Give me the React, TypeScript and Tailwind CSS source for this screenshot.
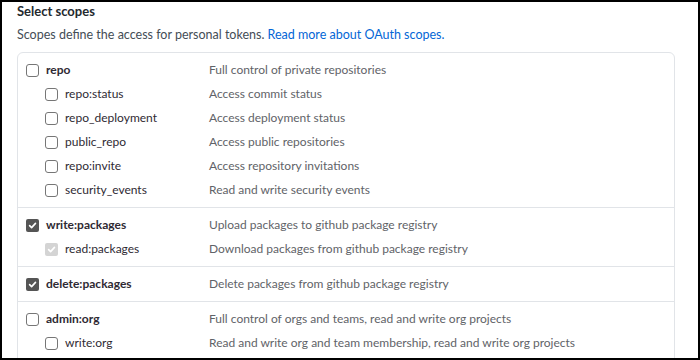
import React from 'react';

type Scope = {
  name: string;
  desc: string;
  checked?: boolean;
  disabled?: boolean;
  children?: Scope[];
};

const groups: Scope[] = [
  {
    name: 'repo',
    desc: 'Full control of private repositories',
    children: [
      { name: 'repo:status', desc: 'Access commit status' },
      { name: 'repo_deployment', desc: 'Access deployment status' },
      { name: 'public_repo', desc: 'Access public repositories' },
      { name: 'repo:invite', desc: 'Access repository invitations' },
      { name: 'security_events', desc: 'Read and write security events' },
    ],
  },
  {
    name: 'write:packages',
    desc: 'Upload packages to github package registry',
    checked: true,
    children: [
      { name: 'read:packages', desc: 'Download packages from github package registry', checked: true, disabled: true },
    ],
  },
  {
    name: 'delete:packages',
    desc: 'Delete packages from github package registry',
    checked: true,
  },
  {
    name: 'admin:org',
    desc: 'Full control of orgs and teams, read and write org projects',
    children: [
      { name: 'write:org', desc: 'Read and write org and team membership, read and write org projects' },
      { name: 'read:org', desc: 'Read org and team membership, read org projects' },
    ],
  },
];

function Box({ checked, disabled }: { checked?: boolean; disabled?: boolean }) {
  if (checked) {
    return (
      <span
        className={`flex items-center justify-center w-[13px] h-[13px] rounded-[2px] ${
          disabled ? 'bg-[#d4d4d4]' : 'bg-[#555555]'
        }`}
      >
        <svg width="9" height="9" viewBox="0 0 10 10" fill="none">
          <path d="M1.8 5.2 L4 7.4 L8.3 2.6" stroke="white" strokeWidth="1.8" strokeLinecap="round" strokeLinejoin="round" />
        </svg>
      </span>
    );
  }
  return <span className="block w-[13px] h-[13px] rounded-[3px] border border-[#767676] bg-white" />;
}

function Row({ scope, nested }: { scope: Scope; nested?: boolean }) {
  return (
    <div className="flex items-center h-6">
      <div className={`flex items-center w-[191px] shrink-0 ${nested ? 'pl-[27px]' : 'pl-[8px]'}`}>
        <Box checked={scope.checked} disabled={scope.disabled} />
        <span className={`ml-[7px] text-[#2f2a33] ${nested ? '' : 'font-bold'}`}>{scope.name}</span>
      </div>
      <span className="text-[#5f6368]">{scope.desc}</span>
    </div>
  );
}

export default function App() {
  return (
    <div
      className="w-[700px] h-[360px] overflow-hidden border-2 border-black bg-white text-[12px] leading-none"
      style={{ fontFamily: 'Lato, "Open Sans", sans-serif' }}
    >
      <div className="pl-[15px] pr-[23px] pt-[1px]">
        <h2 className="text-[13px] font-bold text-[#24292e] leading-[16px]">Select scopes</h2>
        <p className="mt-[8px] text-[12.5px] text-[#444d56] leading-[16px]">
          Scopes define the access for personal tokens.{' '}
          <span className="text-[#0366d6]">Read more about OAuth scopes.</span>
        </p>
        <div className="mt-[9px] border border-[#e1e4e8] rounded-md">
          {groups.map((g, i) => (
            <div key={g.name} className={`py-[5px] ${i > 0 ? 'border-t border-[#e1e4e8]' : ''}`}>
              <Row scope={g} />
              {g.children?.map(c => <Row key={c.name} scope={c} nested />)}
            </div>
          ))}
        </div>
      </div>
    </div>
  );
}
